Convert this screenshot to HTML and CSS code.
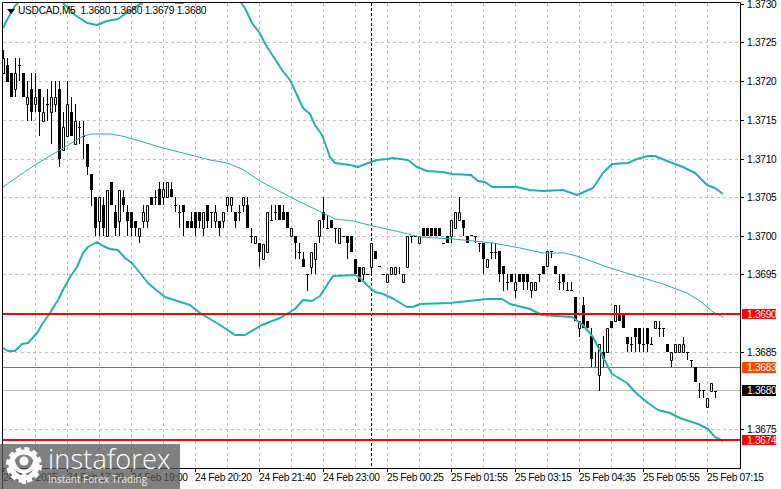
FILE: index.html
```html
<!DOCTYPE html>
<html lang="en">
<head>
<meta charset="utf-8">
<title>USDCAD,M5</title>
<link rel="stylesheet" href="styles.css">
</head>
<body>
<main class="chart">
<svg class="plot" width="781" height="489" viewBox="0 0 781 489" xmlns="http://www.w3.org/2000/svg">
<path class="grid" d="M3 42.5H740M3 81.5H740M3 120.5H740M3 159.5H740M3 197.5H740M3 236.5H740M3 274.5H740M3 313.5H740M3 352.5H740M3 429.5H740"/>
<path class="grid" d="M35.5 3V468M67.5 3V468M99.5 3V468M131.5 3V468M163.5 3V468M195.5 3V468M227.5 3V468M259.5 3V468M291.5 3V468M323.5 3V468M355.5 3V468M387.5 3V468M419.5 3V468M451.5 3V468M483.5 3V468M515.5 3V468M547.5 3V468M579.5 3V468M611.5 3V468M643.5 3V468M675.5 3V468M707.5 3V468"/>
<path class="sep" d="M371.5 3V468"/>
<path class="level-grey" d="M3 390.5H740"/>
<path class="level-orange" d="M3 367.5H740"/>

<path class="wick" d="M3.5 50V73M7.5 58V82M11.5 73V97M15.5 58V97M19.5 58V81M23.5 73V97M27.5 81V121M31.5 73V121M35.5 73V112M39.5 89V136M43.5 97V121M47.5 89V121M51.5 81V144M55.5 81V112M59.5 81V167M63.5 112V150M67.5 81V136M71.5 97V136M75.5 104V144M79.5 121V144M83.5 121V159M87.5 144V175M91.5 174V206M95.5 197V236M99.5 197V236M103.5 197V236M107.5 190V236M111.5 182V205M115.5 205V236M119.5 190V236M123.5 190V212M127.5 205V236M131.5 212V236M135.5 221V236M139.5 228V243M143.5 205V228M147.5 205V228M151.5 197V205M155.5 190V205M159.5 182V205M163.5 182V205M167.5 182V197M171.5 182V197M175.5 197V212M179.5 205V228M183.5 205V236M187.5 221V228M191.5 212V228M195.5 212V236M199.5 212V228M203.5 212V236M207.5 205V228M211.5 212V228M215.5 205V228M219.5 221V236M223.5 212V228M227.5 197V212M231.5 197V212M235.5 212V228M239.5 205V221M243.5 197V212M247.5 197V228M251.5 228V243M255.5 236V243M259.5 243V267M263.5 244V259M267.5 212V252M271.5 205V220M275.5 205V220M279.5 205V220M283.5 205V220M287.5 212V228M291.5 228V236M295.5 236V259M299.5 243V259M303.5 252V267M307.5 274V291M311.5 252V274M315.5 243V274M319.5 220V243M323.5 197V228M327.5 215V228M331.5 220V228M335.5 228V243M339.5 228V243M347.5 236V259M351.5 236V252M355.5 259V274M359.5 267V282M363.5 267V282M371.5 243V274M375.5 251V259M387.5 274V282M391.5 267V274M395.5 267V274M399.5 267V274M403.5 274V282M407.5 236V267M411.5 236V243M419.5 236V243M423.5 228V236M427.5 228V236M431.5 228V236M435.5 228V236M439.5 228V236M447.5 236V243M451.5 220V243M455.5 212V228M459.5 197V220M463.5 220V236M467.5 236V243M475.5 236V243M479.5 243V252M483.5 243V274M487.5 259V267M491.5 243V259M495.5 243V259M499.5 251V282M503.5 266V291M507.5 274V290M511.5 274V282M515.5 274V298M519.5 274V282M523.5 274V290M527.5 274V290M531.5 282V298M535.5 282V290M539.5 274V282M543.5 266V274M547.5 251V266M551.5 251V258M555.5 266V274M559.5 274V290M563.5 274V290M567.5 282V290M571.5 282V290M575.5 297V321M579.5 321V337M583.5 297V328M587.5 321V328M591.5 328V367M595.5 352V367M599.5 344V391M603.5 336V367M607.5 328V352M611.5 321V328M615.5 305V321M619.5 305V321M623.5 315V328M627.5 337V352M631.5 337V352M635.5 328V352M639.5 328V352M643.5 328V352M647.5 328V352M651.5 337V344M655.5 321V328M659.5 321V337M663.5 328V337M667.5 344V352M671.5 352V367M675.5 344V352M679.5 344V352M683.5 337V352M687.5 352V360M691.5 360V367M695.5 367V382M699.5 383V398M703.5 390V398M707.5 398V407M711.5 383V391M715.5 391V398"/>
<path class="wick" d="M18 65.5h3M46 104.5h3M78 127.5h3M82 136.5h3M154 197.5h3M174 205.5h3M178 212.5h3M210 212.5h3M238 212.5h3M250 236.5h3M270 220.5h3M274 212.5h3M298 252.5h3M306 274.5h3M326 228.5h3M334 228.5h3M342 236.5h3M366 274.5h3M378 266.5h3M382 274.5h3M410 236.5h3M414 236.5h3M442 243.5h3M470 235.5h3M474 236.5h3M478 243.5h3M490 252.5h3M494 252.5h3M506 282.5h3M538 274.5h3M550 251.5h3M558 282.5h3M566 290.5h3M570 290.5h3M630 344.5h3M642 344.5h3M650 344.5h3M658 328.5h3M662 328.5h3M686 352.5h3M690 360.5h3M698 390.5h3M702 390.5h3M714 391.5h3"/>
<path class="body-down" d="M6 65h3V82h-3zM10 73h3V97h-3zM22 73h3V97h-3zM30 89h3V112h-3zM38 89h3V112h-3zM58 89h3V159h-3zM70 112h3V136h-3zM86 144h3V167h-3zM90 174h3V190h-3zM94 197h3V228h-3zM102 205h3V228h-3zM110 182h3V205h-3zM114 212h3V228h-3zM122 197h3V205h-3zM126 212h3V221h-3zM130 212h3V228h-3zM134 221h3V228h-3zM150 197h3V205h-3zM158 189h3V205h-3zM170 189h3V197h-3zM182 205h3V212h-3zM186 221h3V228h-3zM190 221h3V228h-3zM194 212h3V228h-3zM198 212h3V221h-3zM206 205h3V221h-3zM218 221h3V228h-3zM234 212h3V221h-3zM246 205h3V228h-3zM258 243h3V252h-3zM278 205h3V220h-3zM282 212h3V220h-3zM286 212h3V228h-3zM294 236h3V243h-3zM302 259h3V267h-3zM322 212h3V220h-3zM330 220h3V228h-3zM346 236h3V243h-3zM350 236h3V252h-3zM354 259h3V274h-3zM358 267h3V282h-3zM374 251h3V259h-3zM422 228h3V236h-3zM426 228h3V236h-3zM430 228h3V236h-3zM434 228h3V236h-3zM438 228h3V236h-3zM446 236h3V243h-3zM462 220h3V228h-3zM466 236h3V243h-3zM482 243h3V259h-3zM498 251h3V274h-3zM502 266h3V274h-3zM510 274h3V282h-3zM518 274h3V282h-3zM522 274h3V282h-3zM526 274h3V282h-3zM542 266h3V274h-3zM554 266h3V274h-3zM562 274h3V282h-3zM574 297h3V321h-3zM582 305h3V328h-3zM586 321h3V328h-3zM590 336h3V359h-3zM602 352h3V359h-3zM610 321h3V328h-3zM618 313h3V321h-3zM622 315h3V328h-3zM626 337h3V344h-3zM634 328h3V337h-3zM638 328h3V344h-3zM646 328h3V344h-3zM666 344h3V352h-3zM694 367h3V382h-3z"/>
<path class="body-up" d="M2.5 58.5h2V73.5h-2zM14.5 73.5h2V89.5h-2zM26.5 97.5h2V104.5h-2zM34.5 97.5h2V104.5h-2zM42.5 112.5h2V121.5h-2zM50.5 97.5h2V112.5h-2zM54.5 97.5h2V104.5h-2zM62.5 127.5h2V150.5h-2zM66.5 104.5h2V136.5h-2zM74.5 121.5h2V144.5h-2zM98.5 197.5h2V221.5h-2zM106.5 190.5h2V236.5h-2zM118.5 190.5h2V221.5h-2zM138.5 228.5h2V236.5h-2zM142.5 212.5h2V221.5h-2zM146.5 205.5h2V221.5h-2zM162.5 189.5h2V197.5h-2zM166.5 182.5h2V197.5h-2zM202.5 212.5h2V228.5h-2zM214.5 212.5h2V221.5h-2zM222.5 212.5h2V221.5h-2zM226.5 197.5h2V205.5h-2zM230.5 197.5h2V205.5h-2zM242.5 197.5h2V205.5h-2zM254.5 236.5h2V243.5h-2zM262.5 244.5h2V259.5h-2zM266.5 212.5h2V252.5h-2zM290.5 228.5h2V236.5h-2zM310.5 252.5h2V267.5h-2zM314.5 243.5h2V259.5h-2zM318.5 220.5h2V236.5h-2zM338.5 228.5h2V243.5h-2zM362.5 267.5h2V274.5h-2zM370.5 243.5h2V267.5h-2zM386.5 274.5h2V282.5h-2zM390.5 267.5h2V274.5h-2zM394.5 267.5h2V274.5h-2zM402.5 274.5h2V282.5h-2zM406.5 236.5h2V267.5h-2zM418.5 236.5h2V243.5h-2zM450.5 220.5h2V236.5h-2zM454.5 212.5h2V228.5h-2zM458.5 212.5h2V220.5h-2zM486.5 259.5h2V267.5h-2zM514.5 282.5h2V290.5h-2zM530.5 282.5h2V290.5h-2zM534.5 282.5h2V290.5h-2zM546.5 251.5h2V266.5h-2zM578.5 321.5h2V328.5h-2zM598.5 344.5h2V375.5h-2zM606.5 328.5h2V352.5h-2zM614.5 305.5h2V321.5h-2zM654.5 321.5h2V328.5h-2zM670.5 352.5h2V360.5h-2zM674.5 344.5h2V352.5h-2zM678.5 344.5h2V352.5h-2zM682.5 344.5h2V352.5h-2zM706.5 398.5h2V407.5h-2zM710.5 383.5h2V391.5h-2z"/>

<polyline class="band" points="3,28 7,20 15,6 18,3"/>
<polyline class="band" points="63,3 68,8 75,15 87,23 97,25 107,21 118,19 128,12 140,4 143,3"/>
<polyline class="band" points="175,3 184,3"/>
<polyline class="band" points="241,3 245,8 252,23 259,32 267,47 275,59 282,70 290,80 303,108 310,114 315,125 322,135 330,157 335,163 350,165 358,167 368,163 377,160 387,159 393,158 400,159 408,160 417,167 427,171 443,172 452,174 471,175 478,181 485,182 492,187 517,187 530,190 543,191 563,190 577,195 593,188 603,173 612,164 628,163 637,159 648,156 655,156 667,161 683,167 695,173 707,185 715,188 723,194"/>
<polyline class="band" points="3,348 8,351 15,351 22,344 28,343 37,333 43,323 50,313 58,300 63,290 70,277 77,267 83,253 88,247 97,242 103,246 110,249 118,250 125,258 132,263 140,273 148,283 155,289 165,297 190,305 200,313 220,325 235,335 245,335 262,325 280,318 295,309 303,300 312,301 320,296 327,285 333,276 355,275 360,278 367,285 375,292 383,294 392,298 407,307 413,307 420,304 450,303 487,299 502,299 510,304 530,309 542,315 572,317 583,325 593,337 598,347 607,365 612,374 627,383 635,392 648,403 658,410 670,413 680,418 698,424 708,429 715,437 723,441"/>
<polyline class="mid" points="3,187 20,175 38,163 60,150 83,136 92,134 110,134 122,136 143,142 163,148 187,154 210,160 227,163 242,169 260,181 290,197 323,213 335,219 353,221 373,226 400,232 420,237 453,239 473,241 493,243 520,248 543,253 565,253 580,257 607,267 633,275 663,284 687,293 700,301 713,312 723,317"/>

<path class="level-red" d="M3 314H740M3 440H740"/>
<path class="frame" d="M2.5 489V2.5H740.5V469M2.5 468.5H740.5"/>
<path class="frame" d="M741 4.5h3M741 42.5h3M741 81.5h3M741 120.5h3M741 159.5h3M741 197.5h3M741 236.5h3M741 274.5h3M741 352.5h3M741 429.5h3M3.5 469v3M67.5 469v3M131.5 469v3M195.5 469v3M259.5 469v3M323.5 469v3M387.5 469v3M451.5 469v3M515.5 469v3M579.5 469v3M643.5 469v3M707.5 469v3"/>

<polygon class="marker" points="7,9 15,9 11,14"/>
<text class="legend" x="18" y="14">USDCAD,M5&#160;&#160;1.3680 1.3680 1.3679 1.3680</text>

<g class="axis-y">
<text x="747" y="8">1.3730</text>
<text x="747" y="46">1.3725</text>
<text x="747" y="85">1.3720</text>
<text x="747" y="124">1.3715</text>
<text x="747" y="163">1.3710</text>
<text x="747" y="201">1.3705</text>
<text x="747" y="240">1.3700</text>
<text x="747" y="278">1.3695</text>
<text x="747" y="356">1.3685</text>
<text x="747" y="433">1.3675</text>
</g>
<rect class="tag-red" x="742" y="309" width="34" height="10"/>
<rect class="tag-orange" x="742" y="362" width="34" height="11"/>
<rect class="tag-black" x="742" y="385" width="34" height="11"/>
<rect class="tag-red" x="742" y="435" width="34" height="10"/>
<g class="axis-tag">
<text x="747" y="318">1.3690</text>
<text x="747" y="371">1.3683</text>
<text x="747" y="394">1.3680</text>
<text x="747" y="444">1.3674</text>
</g>
<g class="axis-x">
<text x="3" y="481">24 Feb 2025</text>
<text x="67" y="481">24 Feb 17:40</text>
<text x="131" y="481">24 Feb 19:00</text>
<text x="195" y="481">24 Feb 20:20</text>
<text x="259" y="481">24 Feb 21:40</text>
<text x="323" y="481">24 Feb 23:00</text>
<text x="387" y="481">25 Feb 00:25</text>
<text x="451" y="481">25 Feb 01:55</text>
<text x="515" y="481">25 Feb 03:15</text>
<text x="579" y="481">25 Feb 04:35</text>
<text x="643" y="481">25 Feb 05:55</text>
<text x="707" y="481">25 Feb 07:15</text>
</g>
</svg>

<aside class="brand">
<svg class="gear" width="42" height="45" viewBox="0 0 42 45" xmlns="http://www.w3.org/2000/svg">
<circle class="gear-teeth" cx="21" cy="21" r="15.5"/>
<circle class="gear-ring" cx="21" cy="21" r="13"/>
<circle class="gear-head" cx="21" cy="17" r="4.5"/>
<path class="gear-body" d="M10 17c1 7 5 10 11 11 6-1 10-4 11-11M21 26V40"/>
</svg>
<div class="brand-text">
<div class="brand-name">instaforex</div>
<div class="brand-tag">Instant Forex Trading</div>
</div>
</aside>
</main>
</body>
</html>
```
FILE: styles.css
```css
html, body {
  margin: 0;
  padding: 0;
  background: #fff;
}
.chart {
  position: relative;
  width: 781px;
  height: 489px;
  overflow: hidden;
  font-family: "Liberation Sans", Arial, sans-serif;
}
.plot {
  display: block;
}
.plot path, .plot polyline {
  fill: none;
}
.grid {
  stroke: #c0c0c0;
  stroke-width: 1;
  stroke-dasharray: 3 3;
}
.sep {
  stroke: #000;
  stroke-width: 1;
  stroke-dasharray: 3 2;
}
.level-grey {
  stroke: #c0c0c0;
  stroke-width: 1;
}
.level-orange {
  stroke: #ff4500;
  stroke-width: 1;
}
.level-red {
  stroke: #ff0000;
  stroke-width: 2;
}
.wick {
  stroke: #000;
  stroke-width: 1;
}
.plot .body-down {
  fill: #000;
}
.plot .body-up {
  fill: #fff;
  stroke: #000;
  stroke-width: 1;
}
.band {
  stroke: #20b2aa;
  stroke-width: 2;
  stroke-linejoin: round;
}
.mid {
  stroke: #20b2aa;
  stroke-width: 1;
}
.frame {
  stroke: #000;
  stroke-width: 1;
}
.marker {
  fill: #000;
}
.legend, .axis-y text, .axis-x text, .axis-tag text {
  font-family: "Liberation Sans", Arial, sans-serif;
  font-size: 10.2px;
  letter-spacing: -0.28px;
  fill: #000;
}
.axis-tag text {
  fill: #fff;
}
.tag-red {
  fill: #ff0000;
}
.tag-orange {
  fill: #ff4500;
}
.tag-black {
  fill: #000;
}
.brand {
  position: absolute;
  left: 0;
  top: 444px;
  width: 180px;
  height: 45px;
  display: flex;
  gap: 3px;
  background: rgba(86, 86, 86, 0.75);
  color: #fff;
}
.gear {
  flex: none;
  margin-left: 3px;
}
.gear-teeth {
  fill: none;
  stroke: #fff;
  stroke-width: 5;
  stroke-dasharray: 5 3.1;
}
.gear-ring {
  fill: none;
  stroke: #fff;
  stroke-width: 5;
}
.gear-head {
  fill: #fff;
}
.gear-body {
  fill: none;
  stroke: #fff;
  stroke-width: 4;
}
.brand-text {
  display: flex;
  flex-direction: column;
}
.brand-name {
  font-family: "Open Sans", sans-serif;
  font-weight: 300;
  font-size: 27px;
  line-height: 28px;
  margin-top: 1px;
  letter-spacing: 0.2px;
}
.brand-tag {
  font-family: "Open Sans", sans-serif;
  font-size: 10px;
  line-height: 12px;
  opacity: 0.85;
}
```
